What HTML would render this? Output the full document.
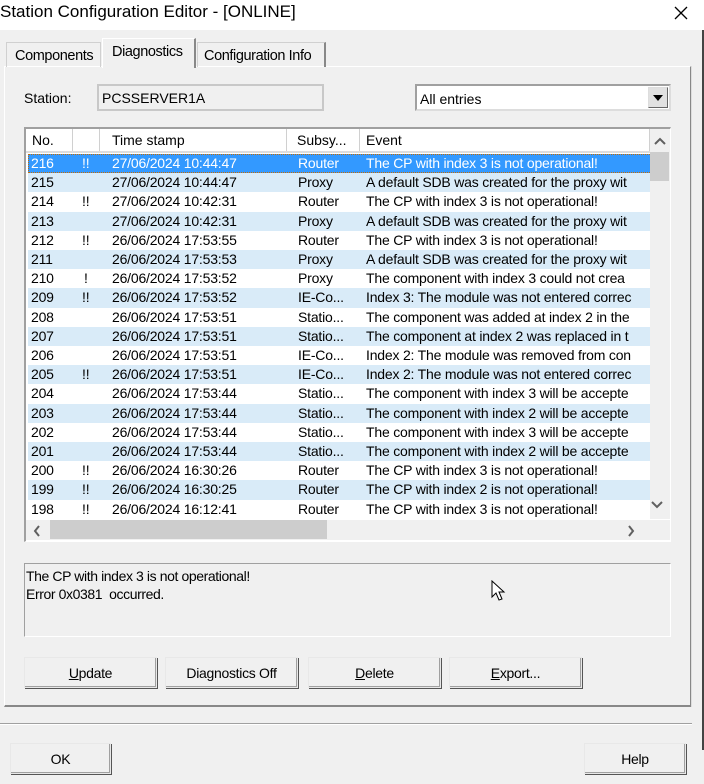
<!DOCTYPE html>
<html><head><style>
*{box-sizing:border-box;margin:0;padding:0}
body{width:704px;height:784px;background:#f0f0f0;font-family:"Liberation Sans",sans-serif;font-size:14px;color:#000;position:relative;overflow:hidden}
.a{position:absolute}
.title{left:0;top:0;width:704px;height:30px;background:#fff;font-size:17px;line-height:23px;padding-left:0}
.sunk{border-top:1px solid #a0a0a0;border-left:1px solid #a0a0a0;border-right:1px solid #fff;border-bottom:1px solid #fff}
.btn{background:#f0f0f0;border:1px solid #e8e8e8;box-shadow:inset -1px -1px 0 #a0a0a0, 1px 1px 0 #555;text-align:center;line-height:30px;font-size:14px;letter-spacing:-0.3px}
.row{position:absolute;left:0;width:624px;height:19.2px;line-height:19px;white-space:nowrap;font-size:14px;letter-spacing:-0.2px}
.row span{position:absolute;top:0}
.alt{background:#d9ebf8}
.sel{background:#3399ff;color:#fff;outline:1px dotted #c76b00;outline-offset:-1px}
.hdr span{position:absolute;top:0;height:22px;border-right:1px solid #d0d0d0;padding-left:6px;line-height:22px;background:#fff}
</style></head><body>
<div class="a title">Station Configuration Editor - [ONLINE]</div>
<svg class="a" style="left:673px;top:5px" width="16" height="16"><path d="M2 2L14 14M14 2L2 14" stroke="#000" stroke-width="1.3"/></svg>
<div class="a" style="left:702px;top:30px;width:2px;height:720px;background:#444"></div>
<div class="a" style="left:4px;top:66px;width:687px;height:641px;border:1px solid #fff;border-right:1px solid #888;border-bottom:2px solid #888;box-shadow:1px 0 0 #ddd"></div>
<div class="a" style="left:6px;top:42px;width:95px;height:25px;border:1px solid #d0d0d0;border-bottom:none;line-height:26px;padding-left:8px;font-size:14.5px;letter-spacing:-0.4px">Components</div>
<div class="a" style="left:102px;top:38px;width:94px;height:30px;background:#f0f0f0;border-left:1px solid #fff;border-top:1px solid #fff;border-right:2px solid #888;line-height:26px;padding-left:9px;font-size:14.5px;letter-spacing:-0.4px">Diagnostics</div>
<div class="a" style="left:197px;top:42px;width:129px;height:25px;border:1px solid #d0d0d0;border-right:2px solid #888;border-bottom:none;line-height:26px;padding-left:6px;font-size:14.5px;letter-spacing:-0.4px">Configuration Info</div>
<div class="a" style="left:24px;top:90px">Station:</div>
<div class="a sunk" style="left:97px;top:84px;width:227px;height:27px;padding:4px 3px;border-color:#c8c8c8;border-width:2px">PCSSERVER1A</div>
<div class="a" style="left:415px;top:84px;width:256px;height:27px;background:#fff;border:2px solid #a0a0a0;border-right-color:#ddd;border-bottom-color:#ddd;padding:5px 3px">All entries</div>
<div class="a" style="left:648px;top:87px;width:20px;height:21px;background:#e1e1e1;border:1px solid #ddd;border-right-color:#666;border-bottom-color:#666"></div>
<svg class="a" style="left:652px;top:94px" width="12" height="8"><path d="M1 1H11L6 7Z" fill="#000"/></svg>
<div class="a" style="left:24px;top:127px;width:647px;height:415px;background:#fff;border-top:2px solid #a0a0a0;border-left:2px solid #a0a0a0;border-right:1px solid #fff;border-bottom:1px solid #fff"></div>
<div class="a hdr" style="left:26px;top:129px;width:624px;height:22px;font-size:14px">
<span style="left:0;width:47px">No.</span><span style="left:47px;width:27px"></span><span style="left:74px;width:187px;padding-left:12px">Time stamp</span><span style="left:261px;width:73px;padding-left:10px">Subsy...</span><span style="left:334px;width:290px;padding-left:6px">Event</span>
</div>
<div class="a" style="left:26px;top:151px;width:624px;height:2px;background:#ddd"></div>
<div class="a" style="left:28px;top:154px;width:624px;height:365px;overflow:hidden">
<div class="row sel" style="top:0"><span style="left:3px">216</span><span style="left:54px">!!</span><span style="left:84px">27/06/2024 10:44:47</span><span style="left:270px">Router</span><span style="left:338px">The CP with index 3 is not operational!</span></div>
<div class="row alt" style="top:19.2px"><span style="left:3px">215</span><span style="left:84px">27/06/2024 10:44:47</span><span style="left:270px">Proxy</span><span style="left:338px">A default SDB was created for the proxy wit</span></div>
<div class="row" style="top:38.4px"><span style="left:3px">214</span><span style="left:54px">!!</span><span style="left:84px">27/06/2024 10:42:31</span><span style="left:270px">Router</span><span style="left:338px">The CP with index 3 is not operational!</span></div>
<div class="row alt" style="top:57.6px"><span style="left:3px">213</span><span style="left:84px">27/06/2024 10:42:31</span><span style="left:270px">Proxy</span><span style="left:338px">A default SDB was created for the proxy wit</span></div>
<div class="row" style="top:76.8px"><span style="left:3px">212</span><span style="left:54px">!!</span><span style="left:84px">26/06/2024 17:53:55</span><span style="left:270px">Router</span><span style="left:338px">The CP with index 3 is not operational!</span></div>
<div class="row alt" style="top:96px"><span style="left:3px">211</span><span style="left:84px">26/06/2024 17:53:53</span><span style="left:270px">Proxy</span><span style="left:338px">A default SDB was created for the proxy wit</span></div>
<div class="row" style="top:115.2px"><span style="left:3px">210</span><span style="left:56px">!</span><span style="left:84px">26/06/2024 17:53:52</span><span style="left:270px">Proxy</span><span style="left:338px">The component with index 3 could not crea</span></div>
<div class="row alt" style="top:134.4px"><span style="left:3px">209</span><span style="left:54px">!!</span><span style="left:84px">26/06/2024 17:53:52</span><span style="left:270px">IE-Co...</span><span style="left:338px">Index 3: The module was not entered correc</span></div>
<div class="row" style="top:153.6px"><span style="left:3px">208</span><span style="left:84px">26/06/2024 17:53:51</span><span style="left:270px">Statio...</span><span style="left:338px">The component was added at index 2 in the</span></div>
<div class="row alt" style="top:172.8px"><span style="left:3px">207</span><span style="left:84px">26/06/2024 17:53:51</span><span style="left:270px">Statio...</span><span style="left:338px">The component at index 2 was replaced in t</span></div>
<div class="row" style="top:192px"><span style="left:3px">206</span><span style="left:84px">26/06/2024 17:53:51</span><span style="left:270px">IE-Co...</span><span style="left:338px">Index 2: The module was removed from con</span></div>
<div class="row alt" style="top:211.2px"><span style="left:3px">205</span><span style="left:54px">!!</span><span style="left:84px">26/06/2024 17:53:51</span><span style="left:270px">IE-Co...</span><span style="left:338px">Index 2: The module was not entered correc</span></div>
<div class="row" style="top:230.4px"><span style="left:3px">204</span><span style="left:84px">26/06/2024 17:53:44</span><span style="left:270px">Statio...</span><span style="left:338px">The component with index 3 will be accepte</span></div>
<div class="row alt" style="top:249.6px"><span style="left:3px">203</span><span style="left:84px">26/06/2024 17:53:44</span><span style="left:270px">Statio...</span><span style="left:338px">The component with index 2 will be accepte</span></div>
<div class="row" style="top:268.8px"><span style="left:3px">202</span><span style="left:84px">26/06/2024 17:53:44</span><span style="left:270px">Statio...</span><span style="left:338px">The component with index 3 will be accepte</span></div>
<div class="row alt" style="top:288px"><span style="left:3px">201</span><span style="left:84px">26/06/2024 17:53:44</span><span style="left:270px">Statio...</span><span style="left:338px">The component with index 2 will be accepte</span></div>
<div class="row" style="top:307.2px"><span style="left:3px">200</span><span style="left:54px">!!</span><span style="left:84px">26/06/2024 16:30:26</span><span style="left:270px">Router</span><span style="left:338px">The CP with index 3 is not operational!</span></div>
<div class="row alt" style="top:326.4px"><span style="left:3px">199</span><span style="left:54px">!!</span><span style="left:84px">26/06/2024 16:30:25</span><span style="left:270px">Router</span><span style="left:338px">The CP with index 2 is not operational!</span></div>
<div class="row" style="top:345.6px"><span style="left:3px">198</span><span style="left:54px">!!</span><span style="left:84px">26/06/2024 16:12:41</span><span style="left:270px">Router</span><span style="left:338px">The CP with index 3 is not operational!</span></div>
</div>
<div class="a" style="left:650px;top:129px;width:20px;height:390px;background:#f0f0f0"></div>
<div class="a" style="left:650px;top:152px;width:19px;height:29px;background:#cdcdcd"></div>
<svg class="a" style="left:654px;top:137px" width="12" height="8"><path d="M1 7L6 2L11 7" stroke="#606060" stroke-width="2" fill="none"/></svg>
<svg class="a" style="left:651px;top:501px" width="12" height="8"><path d="M1 1L6 6L11 1" stroke="#606060" stroke-width="2" fill="none"/></svg>
<div class="a" style="left:26px;top:520px;width:644px;height:20px;background:#f0f0f0"></div>
<div class="a" style="left:50px;top:520px;width:277px;height:19px;background:#cdcdcd"></div>
<svg class="a" style="left:33px;top:525px" width="8" height="12"><path d="M6 1L2 6L6 11" stroke="#606060" stroke-width="2" fill="none"/></svg>
<svg class="a" style="left:627px;top:525px" width="8" height="12"><path d="M2 1L6 6L2 11" stroke="#606060" stroke-width="2" fill="none"/></svg>
<div class="a" style="left:24px;top:563px;width:647px;height:74px;border-top:1px solid #a0a0a0;border-left:1px solid #a0a0a0;border-right:1px solid #fff;border-bottom:1px solid #fff;padding:3px 0 0 1px;line-height:18px;font-size:14px;letter-spacing:-0.4px">The CP with index 3 is not operational!<br>Error 0x0381&nbsp; occurred.</div>
<svg class="a" style="left:491px;top:580px" width="16" height="24"><path d="M1 1V17L5 13L8 20L11 19L8 12H13Z" fill="#fff" stroke="#000" stroke-width="1"/></svg>
<div class="a btn" style="left:24px;top:657px;width:133px;height:31px"><u>U</u>pdate</div>
<div class="a btn" style="left:165px;top:657px;width:133px;height:31px">Diagnostics Off</div>
<div class="a btn" style="left:308px;top:657px;width:133px;height:31px"><u>D</u>elete</div>
<div class="a btn" style="left:449px;top:657px;width:133px;height:31px"><u>E</u>xport...</div>
<div class="a" style="left:0;top:723px;width:692px;height:1px;background:#a0a0a0"></div>
<div class="a" style="left:0;top:724px;width:692px;height:1px;background:#fff"></div>
<div class="a btn" style="left:10px;top:743px;width:101px;height:31px">OK</div>
<div class="a btn" style="left:584px;top:743px;width:102px;height:31px">Help</div>
</body></html>
